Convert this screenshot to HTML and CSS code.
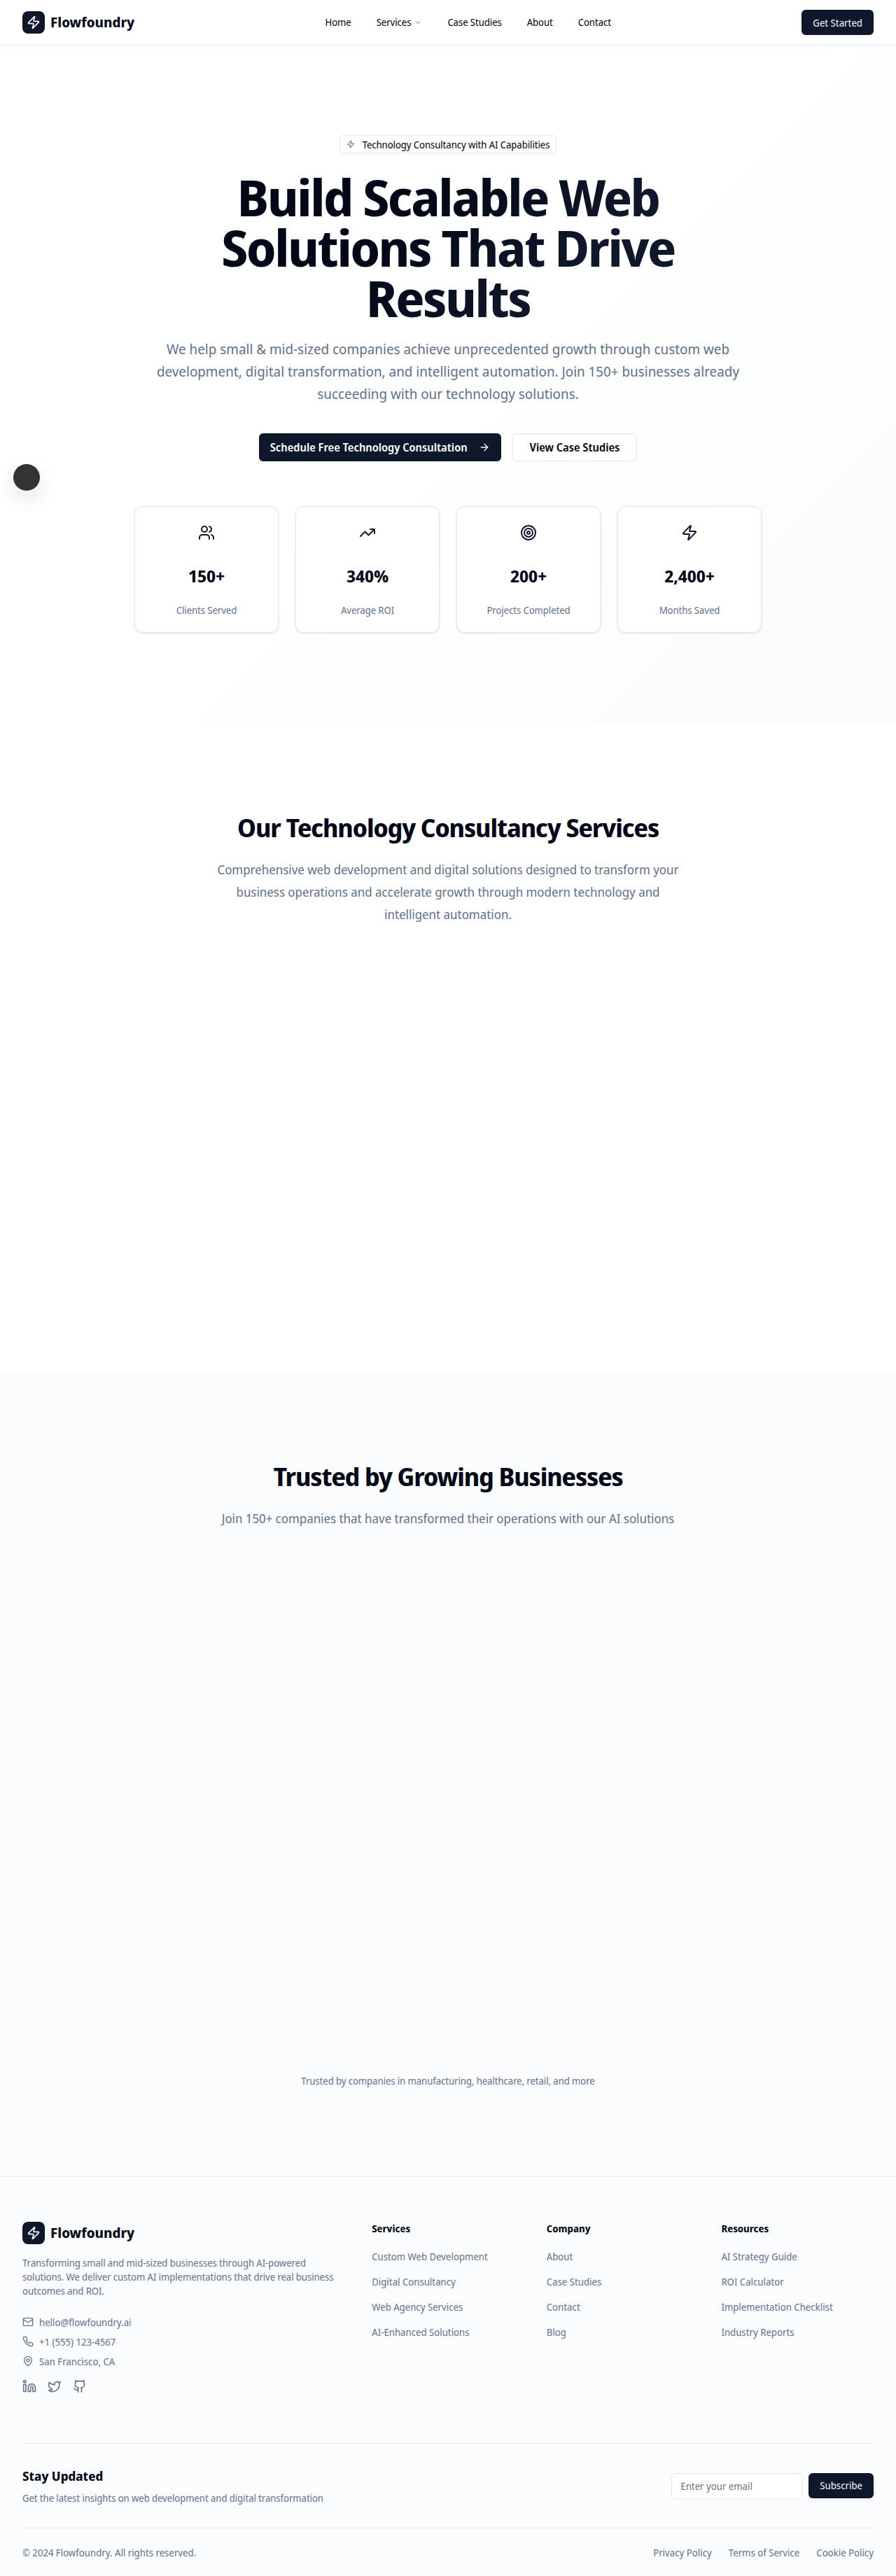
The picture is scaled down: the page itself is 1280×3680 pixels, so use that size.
FILE: index.html
```html
<!DOCTYPE html>
<html lang="en">
<head>
    <meta charset="UTF-8">
    <meta name="viewport" content="width=device-width, initial-scale=1.0">
    <title>Flowfoundry</title>
    <link rel="stylesheet" href="styles.css">
</head>
<body>
    <header class="navbar">
        <a class="brand" href="#">
            <span class="brand-mark">
                <svg class="icon icon-20" viewBox="0 0 24 24"><path d="M4 14a1 1 0 0 1-.78-1.63l9.9-10.2a.5.5 0 0 1 .86.46l-1.92 6.02A1 1 0 0 0 13 10h7a1 1 0 0 1 .78 1.63l-9.9 10.2a.5.5 0 0 1-.86-.46l1.92-6.02A1 1 0 0 0 11 14z"/></svg>
            </span>
            <span class="brand-name">Flowfoundry</span>
        </a>
        <nav class="nav-links">
            <a href="#">Home</a>
            <a href="#" class="nav-drop">Services
                <svg class="icon icon-12" viewBox="0 0 24 24"><path d="m6 9 6 6 6-6"/></svg>
            </a>
            <a href="#">Case Studies</a>
            <a href="#">About</a>
            <a href="#">Contact</a>
        </nav>
        <a class="btn btn-dark btn-small" href="#">Get Started</a>
    </header>

    <!-- Floating dot over the hero -->
    <div class="float-dot"></div>

    <section class="hero">
        <div class="badge">
            <svg class="icon icon-12" viewBox="0 0 24 24"><path d="M4 14a1 1 0 0 1-.78-1.63l9.9-10.2a.5.5 0 0 1 .86.46l-1.92 6.02A1 1 0 0 0 13 10h7a1 1 0 0 1 .78 1.63l-9.9 10.2a.5.5 0 0 1-.86-.46l1.92-6.02A1 1 0 0 0 11 14z"/></svg>
            Technology Consultancy with AI Capabilities
        </div>
        <h1>Build Scalable Web Solutions That Drive Results</h1>
        <p class="hero-text">We help small &amp; mid-sized companies achieve unprecedented growth through custom web development, digital transformation, and intelligent automation. Join 150+ businesses already succeeding with our technology solutions.</p>
        <div class="hero-actions">
            <a class="btn btn-dark btn-large" href="#">Schedule Free Technology Consultation
                <svg class="icon icon-16" viewBox="0 0 24 24"><path d="M5 12h14"/><path d="m12 5 7 7-7 7"/></svg>
            </a>
            <a class="btn btn-light btn-large" href="#">View Case Studies</a>
        </div>
        <div class="stats">
            <div class="stat-card">
                <svg class="icon icon-24" viewBox="0 0 24 24"><path d="M16 21v-2a4 4 0 0 0-4-4H6a4 4 0 0 0-4 4v2"/><path d="M16 3.130a4 4 0 0 1 0 7.750"/><path d="M22 21v-2a4 4 0 0 0-3-3.870"/><circle cx="9" cy="7" r="4"/></svg>
                <div class="stat-value">150+</div>
                <div class="stat-label">Clients Served</div>
            </div>
            <div class="stat-card">
                <svg class="icon icon-24" viewBox="0 0 24 24"><path d="M16 7h6v6"/><path d="m22 7-8.500 8.500-5-5L2 17"/></svg>
                <div class="stat-value">340%</div>
                <div class="stat-label">Average ROI</div>
            </div>
            <div class="stat-card">
                <svg class="icon icon-24" viewBox="0 0 24 24"><circle cx="12" cy="12" r="10"/><circle cx="12" cy="12" r="6"/><circle cx="12" cy="12" r="2"/></svg>
                <div class="stat-value">200+</div>
                <div class="stat-label">Projects Completed</div>
            </div>
            <div class="stat-card">
                <svg class="icon icon-24" viewBox="0 0 24 24"><path d="M4 14a1 1 0 0 1-.78-1.63l9.9-10.2a.5.5 0 0 1 .86.46l-1.92 6.02A1 1 0 0 0 13 10h7a1 1 0 0 1 .78 1.63l-9.9 10.2a.5.5 0 0 1-.86-.46l1.92-6.02A1 1 0 0 0 11 14z"/></svg>
                <div class="stat-value">2,400+</div>
                <div class="stat-label">Months Saved</div>
            </div>
        </div>
    </section>

    <section class="section services">
        <h2>Our Technology Consultancy Services</h2>
        <p class="section-text">Comprehensive web development and digital solutions designed to transform your business operations and accelerate growth through modern technology and intelligent automation.</p>
    </section>

    <section class="section trusted">
        <h2>Trusted by Growing Businesses</h2>
        <p class="section-text wide">Join 150+ companies that have transformed their operations with our AI solutions</p>
        <p class="trusted-note">Trusted by companies in manufacturing, healthcare, retail, and more</p>
    </section>

    <footer class="footer">
        <div class="footer-top">
            <div class="footer-about">
                <a class="brand" href="#">
                    <span class="brand-mark">
                        <svg class="icon icon-20" viewBox="0 0 24 24"><path d="M4 14a1 1 0 0 1-.78-1.63l9.9-10.2a.5.5 0 0 1 .86.46l-1.92 6.02A1 1 0 0 0 13 10h7a1 1 0 0 1 .78 1.63l-9.9 10.2a.5.5 0 0 1-.86-.46l1.92-6.02A1 1 0 0 0 11 14z"/></svg>
                    </span>
                    <span class="brand-name">Flowfoundry</span>
                </a>
                <p class="footer-text">Transforming small and mid-sized businesses through AI-powered solutions. We deliver custom AI implementations that drive real business outcomes and ROI.</p>
                <ul class="contact-list">
                    <li>
                        <svg class="icon icon-16" viewBox="0 0 24 24"><rect x="2" y="4" width="20" height="16" rx="2"/><path d="m22 7-8.970 5.700a1.940 1.940 0 0 1-2.060 0L2 7"/></svg>
                        hello@flowfoundry.ai
                    </li>
                    <li>
                        <svg class="icon icon-16" viewBox="0 0 24 24"><path d="M22 16.920v3a2 2 0 0 1-2.180 2 19.790 19.790 0 0 1-8.630-3.070 19.500 19.500 0 0 1-6-6 19.790 19.790 0 0 1-3.070-8.670A2 2 0 0 1 4.110 2h3a2 2 0 0 1 2 1.720 12.840 12.840 0 0 0 .7 2.810 2 2 0 0 1-.45 2.110L8.090 9.910a16 16 0 0 0 6 6l1.270-1.270a2 2 0 0 1 2.110-.45 12.840 12.840 0 0 0 2.810.7A2 2 0 0 1 22 16.920z"/></svg>
                        +1 (555) 123-4567
                    </li>
                    <li>
                        <svg class="icon icon-16" viewBox="0 0 24 24"><path d="M20 10c0 4.990-5.540 10.190-7.400 11.800a1 1 0 0 1-1.200 0C9.540 20.190 4 14.990 4 10a8 8 0 0 1 16 0"/><circle cx="12" cy="10" r="3"/></svg>
                        San Francisco, CA
                    </li>
                </ul>
                <div class="socials">
                    <svg class="icon icon-20" viewBox="0 0 24 24"><path d="M16 8a6 6 0 0 1 6 6v7h-4v-7a2 2 0 0 0-2-2 2 2 0 0 0-2 2v7h-4v-7a6 6 0 0 1 6-6z"/><rect x="2" y="9" width="4" height="12"/><circle cx="4" cy="4" r="2"/></svg>
                    <svg class="icon icon-20" viewBox="0 0 24 24"><path d="M22 4s-.7 2.100-2 3.400c1.600 10-9.400 17.300-18 11.600 2.200.1 4.400-.6 6-2C3 15.500.5 9.800 3 5.200c2.200 2.600 5.600 4.100 9 4-.9-4.200 4-6.600 7-3.800 1.100 0 3-1.400 3-1.400z"/></svg>
                    <svg class="icon icon-20" viewBox="0 0 24 24"><path d="M15 22v-4a4.800 4.800 0 0 0-1-3.500c3 0 6-2 6-5.500.08-1.250-.27-2.480-1-3.500.28-1.150.28-2.350 0-3.500 0 0-1 0-3 1.500-2.640-.5-5.360-.5-8 0C6 2 5 2 5 2c-.3 1.150-.3 2.350 0 3.500A5.403 5.403 0 0 0 4 9c0 3.500 3 5.500 6 5.500-.39.49-.68 1.050-.85 1.650-.17.6-.22 1.230-.15 1.850v4"/><path d="M9 18c-4.510 2-5-2-7-2"/></svg>
                </div>
            </div>
            <div class="footer-col">
                <h4>Services</h4>
                <a href="#">Custom Web Development</a>
                <a href="#">Digital Consultancy</a>
                <a href="#">Web Agency Services</a>
                <a href="#">AI-Enhanced Solutions</a>
            </div>
            <div class="footer-col">
                <h4>Company</h4>
                <a href="#">About</a>
                <a href="#">Case Studies</a>
                <a href="#">Contact</a>
                <a href="#">Blog</a>
            </div>
            <div class="footer-col">
                <h4>Resources</h4>
                <a href="#">AI Strategy Guide</a>
                <a href="#">ROI Calculator</a>
                <a href="#">Implementation Checklist</a>
                <a href="#">Industry Reports</a>
            </div>
        </div>
        <div class="newsletter">
            <div>
                <h3>Stay Updated</h3>
                <p>Get the latest insights on web development and digital transformation</p>
            </div>
            <form class="newsletter-form">
                <input type="email" placeholder="Enter your email">
                <button type="button" class="btn btn-dark btn-small">Subscribe</button>
            </form>
        </div>
        <div class="footer-bottom">
            <span>© 2024 Flowfoundry. All rights reserved.</span>
            <div class="legal">
                <a href="#">Privacy Policy</a>
                <a href="#">Terms of Service</a>
                <a href="#">Cookie Policy</a>
            </div>
        </div>
    </footer>
</body>
</html>
```

FILE: styles.css
```css
* {
    box-sizing: border-box;
}

body {
    margin: 0;
    font-family: 'Noto Sans Display', 'Noto Sans', sans-serif;
    color: #020817;
    background-color: #fff;
}

a {
    color: inherit;
    text-decoration: none;
}

/* Icons */
.icon {
    fill: none;
    stroke: currentColor;
    stroke-width: 2;
    stroke-linecap: round;
    stroke-linejoin: round;
    flex-shrink: 0;
}

.icon-12 { width: 12px; height: 12px; }
.icon-16 { width: 16px; height: 16px; }
.icon-20 { width: 20px; height: 20px; }
.icon-24 { width: 24px; height: 24px; }

/* Navbar */
.navbar {
    height: 65px;
    padding: 0 32px;
    display: flex;
    align-items: center;
    justify-content: space-between;
    background-color: #fff;
    border-bottom: 1px solid #e2e8f0;
}

.brand {
    display: flex;
    align-items: center;
    gap: 8px;
}

.brand-mark {
    width: 32px;
    height: 32px;
    border-radius: 8px;
    background-color: #0f172a;
    color: #f8fafc;
    display: flex;
    align-items: center;
    justify-content: center;
}

.brand-name {
    font-size: 20px;
    font-weight: 700;
    line-height: 28px;
}

.nav-links {
    display: flex;
    gap: 36px;
    font-size: 14px;
    line-height: 20px;
    letter-spacing: -0.1px;
}

.nav-drop {
    display: flex;
    align-items: center;
    gap: 4px;
}

.nav-drop .icon {
    color: #64748b;
}

/* Buttons */
.btn {
    display: inline-flex;
    align-items: center;
    justify-content: center;
    border-radius: 6px;
    font-family: inherit;
    font-size: 14px;
    border: none;
}

.btn-dark {
    background-color: #0f172a;
    color: #f8fafc;
}

.btn-light {
    background-color: #fff;
    border: 1px solid #e2e8f0;
}

.btn-small {
    height: 36px;
    padding: 0 16px;
}

.btn-large {
    height: 40px;
    padding: 0 16px;
    gap: 16px;
    font-size: 15.500px;
    font-weight: 600;
}

.btn-light.btn-large {
    padding: 0 24px;
}

/* Floating dot */
.float-dot {
    position: absolute;
    left: 19px;
    top: 663px;
    width: 38px;
    height: 38px;
    border-radius: 50%;
    background-color: #333;
    box-shadow: 0 10px 30px rgba(15, 23, 42, 0.12);
}

/* Hero */
.hero {
    height: 967px;
    padding-top: 128px;
    display: flex;
    flex-direction: column;
    align-items: center;
    background: linear-gradient(135deg, #fff 50%, #f9fbfc 100%);
}

.badge {
    display: flex;
    align-items: center;
    gap: 11px;
    height: 26px;
    padding: 0 9px;
    font-size: 14px;
    letter-spacing: -0.1px;
    background-color: #fff;
    border: 1px solid #e2e8f0;
    border-radius: 6px;
}

.badge .icon {
    color: #475569;
}

.hero h1 {
    width: 768px;
    margin: 26px 0 0;
    font-size: 72px;
    font-weight: 700;
    line-height: 72px;
    letter-spacing: -0.033em;
    text-align: center;
    background-image: linear-gradient(135deg, #020817 40%, #0f172a 70%);
    -webkit-background-clip: text;
    background-clip: text;
    color: transparent;
}

.hero-text {
    width: 896px;
    margin: 22px 0 0;
    font-size: 20px;
    line-height: 32px;
    text-align: center;
    color: #64748b;
}

.hero-actions {
    margin-top: 40px;
    display: flex;
    gap: 16px;
}

.stats {
    margin-top: 64px;
    display: grid;
    grid-template-columns: repeat(4, 206px);
    gap: 24px;
}

.stat-card {
    height: 181px;
    padding-top: 25px;
    display: flex;
    flex-direction: column;
    align-items: center;
    background-color: #fff;
    border: 1px solid #e2e8f0;
    border-radius: 12px;
    box-shadow: 0 1px 3px rgba(15, 23, 42, 0.12);
}

.stat-card .icon {
    color: #0f172a;
}

.stat-value {
    margin-top: 34px;
    font-size: 24px;
    font-weight: 700;
    line-height: 32px;
}

.stat-label {
    margin-top: 23px;
    font-size: 14px;
    line-height: 20px;
    letter-spacing: -0.1px;
    color: #64748b;
}

/* Sections */
.section {
    text-align: center;
    display: flex;
    flex-direction: column;
    align-items: center;
}

.section h2 {
    margin: 0;
    font-size: 36px;
    font-weight: 700;
    line-height: 40px;
    letter-spacing: -0.03em;
}

.section-text {
    width: 672px;
    margin: 23px 0 0;
    font-size: 18px;
    line-height: 32px;
    letter-spacing: -0.05px;
    color: #64748b;
}

.section-text.wide {
    width: 800px;
}

.services {
    height: 927px;
    padding-top: 131px;
}

.trusted {
    height: 1150px;
    padding-top: 131px;
    background-color: #fbfcfd;
}

.trusted-note {
    margin: 778px 0 0;
    font-size: 14px;
    line-height: 20px;
    letter-spacing: -0.1px;
    color: #64748b;
}

/* Footer */
.footer {
    height: 571px;
    padding: 64px 32px 0;
    background-color: #fbfcfd;
    border-top: 1px solid #e2e8f0;
    font-size: 14px;
    color: #64748b;
}

.footer-top {
    display: grid;
    grid-template-columns: repeat(5, 1fr);
    gap: 32px;
    height: 317px;
    border-bottom: 1px solid #e2e8f0;
}

.footer-about {
    grid-column: span 2;
}

.footer-about .brand {
    color: #020817;
}

.footer-text {
    margin: 17px 0 0;
    line-height: 20px;
    letter-spacing: -0.1px;
}

.contact-list {
    list-style: none;
    margin: 24px 0 0;
    padding: 0;
}

.contact-list li {
    display: flex;
    align-items: center;
    gap: 8px;
    height: 20px;
    margin-bottom: 8px;
}

.socials {
    margin-top: 16px;
    display: flex;
    gap: 16px;
}

.footer-col {
    display: flex;
    flex-direction: column;
    align-items: flex-start;
    gap: 12px;
}

.footer-col a {
    line-height: 24px;
}

.footer-col h4 {
    margin: 0 0 6px;
    font-size: 14px;
    font-weight: 700;
    line-height: 20px;
    color: #020817;
}

.newsletter {
    height: 121px;
    display: flex;
    align-items: center;
    justify-content: space-between;
    border-bottom: 1px solid #e2e8f0;
}

.newsletter h3 {
    margin: 0;
    font-size: 18px;
    font-weight: 700;
    line-height: 28px;
    color: #020817;
}

.newsletter p {
    margin: 8px 0 0;
    line-height: 20px;
    letter-spacing: -0.1px;
}

.newsletter-form {
    display: flex;
    align-items: flex-start;
    gap: 8px;
}

.newsletter-form input {
    width: 188px;
    height: 37px;
    padding: 0 12px;
    font-family: inherit;
    font-size: 14px;
    background-color: #fff;
    border: 1px solid #e2e8f0;
    border-radius: 6px;
}

.footer-bottom {
    padding-top: 25px;
    display: flex;
    justify-content: space-between;
    line-height: 20px;
}

.legal {
    display: flex;
    gap: 24px;
}
```
